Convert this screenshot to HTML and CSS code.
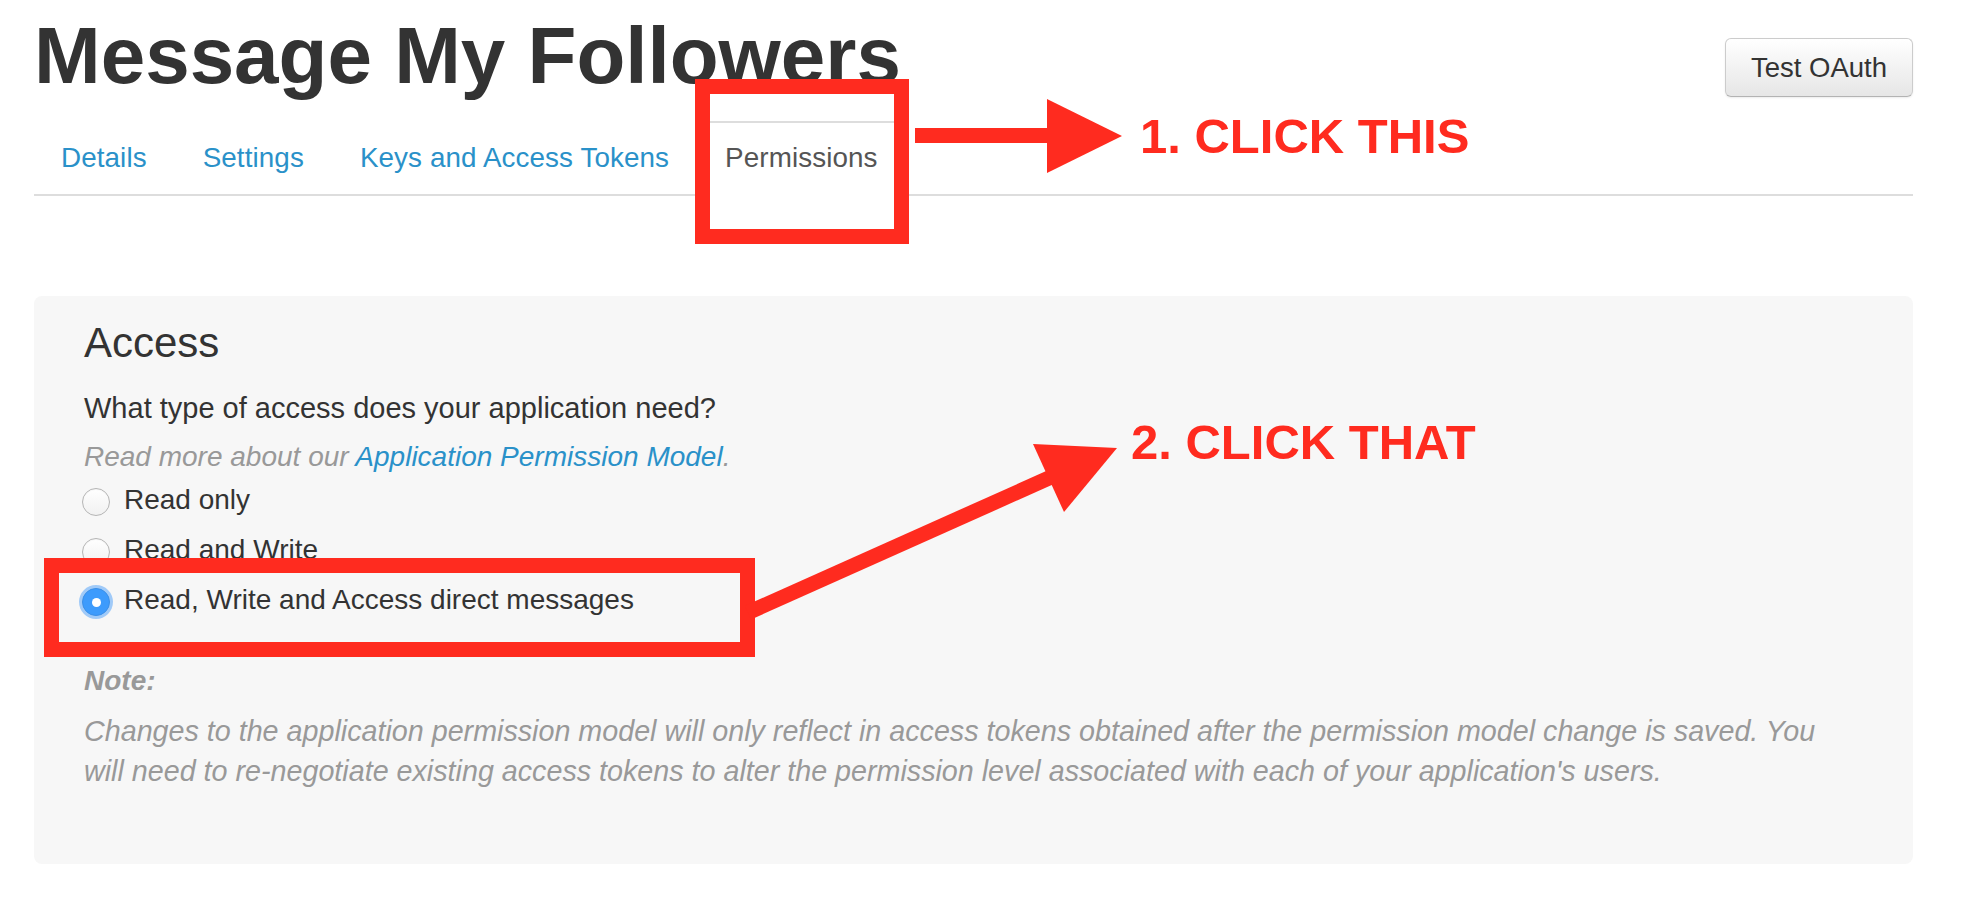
FILE: index.html
```html
<!DOCTYPE html>
<html lang="en">
<head>
<meta charset="utf-8">
<title>Message My Followers - Permissions</title>
<link rel="stylesheet" href="styles.css">
</head>
<body>
<div class="page">
  <header class="app-header">
    <h1 class="app-title">Message My Followers</h1>
    <button class="btn" type="button">Test OAuth</button>
  </header>
  <nav class="tabs">
    <a class="tab" href="#">Details</a>
    <a class="tab" href="#">Settings</a>
    <a class="tab" href="#">Keys and Access Tokens</a>
    <a class="tab active" href="#">Permissions</a>
  </nav>
  <section class="card">
    <h2 class="card-title">Access</h2>
    <p class="question">What type of access does your application need?</p>
    <p class="hint">Read more about our <a href="#">Application Permission Model</a>.</p>
    <label class="option option-first"><input class="radio" type="radio" name="access"><span>Read only</span></label>
    <label class="option"><input class="radio" type="radio" name="access"><span>Read and Write</span></label>
    <label class="option"><input class="radio" type="radio" name="access" checked><span>Read, Write and Access direct messages</span></label>
    <p class="note-title">Note:</p>
    <p class="note">Changes to the application permission model will only reflect in access tokens obtained after the permission model change is saved. You will need to re-negotiate existing access tokens to alter the permission level associated with each of your application's users.</p>
  </section>
</div>

<svg class="annotations" width="1962" height="898" viewBox="0 0 1962 898" xmlns="http://www.w3.org/2000/svg">
  <rect x="702.5" y="86.5" width="199" height="150" fill="none" stroke="#ff2b1f" stroke-width="15"/>
  <rect x="915" y="128" width="134" height="15" fill="#ff2b1f"/>
  <polygon points="1047,99 1122,136 1047,173" fill="#ff2b1f"/>
  <rect x="51.5" y="565.5" width="696" height="84" fill="none" stroke="#ff2b1f" stroke-width="15"/>
  <line x1="748" y1="612.6" x2="1052" y2="476.7" stroke="#ff2b1f" stroke-width="15"/>
  <polygon points="1033,444 1117,448 1064,512" fill="#ff2b1f"/>
</svg>
<div class="callout callout-one">1. CLICK THIS</div>
<div class="callout callout-two">2. CLICK THAT</div>
</body>
</html>
```

FILE: styles.css
```css
* { box-sizing: border-box; }

html, body {
  margin: 0;
  padding: 0;
  background: #ffffff;
}

body {
  font-family: "Liberation Sans", Arial, Helvetica, sans-serif;
  color: #333333;
  width: 1962px;
  height: 898px;
  overflow: hidden;
}

.page {
  padding: 0 49px 0 34px;
}

/* Header */
.app-header {
  display: flex;
  justify-content: space-between;
  align-items: flex-start;
}

.app-title {
  margin: 16px 0 0 0;
  font-size: 80px;
  line-height: 80px;
  font-weight: 700;
  color: #333333;
}

.btn {
  margin-top: 38px;
  height: 59px;
  padding: 0 25px;
  font-family: "Liberation Sans", Arial, Helvetica, sans-serif;
  font-size: 27.5px;
  color: #333333;
  background: linear-gradient(#ffffff, #e6e6e6);
  border: 1px solid #cccccc;
  border-bottom-color: #b3b3b3;
  border-radius: 6px;
  box-shadow: inset 0 1px 0 rgba(255,255,255,0.3), 0 1px 2px rgba(0,0,0,0.08);
}

/* Tabs */
.tabs {
  display: flex;
  gap: 2px;
  margin-top: 24px;
  border-bottom: 2px solid #dddddd;
}

.tab {
  display: block;
  margin-bottom: -2px;
  padding: 20px 25px 21px;
  border: 2px solid transparent;
  font-size: 27.8px;
  line-height: 30px;
  letter-spacing: 0.1px;
  color: #2a91c9;
  text-decoration: none;
}

.tab.active {
  color: #555555;
  background: #ffffff;
  border-color: #dddddd;
  border-bottom-color: #ffffff;
}

/* Card */
.card {
  margin-top: 100px;
  padding: 24px 50px 73px 50px;
  background: #f7f7f7;
  border-radius: 8px;
}

.card p { margin: 0; }

.card-title {
  margin: 0;
  font-size: 42px;
  line-height: 46px;
  font-weight: 400;
  color: #333333;
}

.question,
.hint,
.option,
.note-title,
.note {
  font-size: 28px;
  line-height: 40px;
}

.card .question {
  margin-top: 22px;
  font-size: 29px;
  color: #333333;
}

.card .hint {
  margin-top: 9px;
  font-style: italic;
  color: #999999;
}

.hint a {
  color: #2a91c9;
  text-decoration: none;
}

.option {
  display: flex;
  align-items: center;
  height: 40px;
  margin-top: 10px;
  color: #333333;
}

.option-first { margin-top: 3px; }

.radio {
  appearance: none;
  -webkit-appearance: none;
  position: relative;
  width: 28px;
  height: 28px;
  margin: 4px 14px 0 -2px;
  border-radius: 50%;
  border: 1px solid #b5b5b5;
  background: linear-gradient(#ffffff, #f1f1f1);
  box-shadow: inset 0 1px 1px rgba(0,0,0,0.04);
  flex: none;
}

.radio:checked {
  background: #3d9bfc;
  border-color: #3a8fe8;
  box-shadow: 0 0 0 3px rgba(90, 165, 250, 0.55);
}

.radio:checked::after {
  content: "";
  position: absolute;
  left: 50%;
  top: 50%;
  width: 9px;
  height: 9px;
  margin: -4.5px 0 0 -4.5px;
  border-radius: 50%;
  background: #ffffff;
}

.card .note-title {
  margin-top: 41px;
  font-weight: 700;
  font-style: italic;
  color: #999999;
}

.card .note {
  margin-top: 10px;
  max-width: 1765px;
  font-size: 28.7px;
  font-style: italic;
  color: #999999;
}

/* Annotation overlay */
.annotations {
  position: absolute;
  left: 0;
  top: 0;
  pointer-events: none;
}

.callout {
  position: absolute;
  font-family: "Liberation Sans", Arial, Helvetica, sans-serif;
  font-weight: 700;
  font-size: 49px;
  line-height: 48px;
  color: #ff2b1f;
  white-space: nowrap;
}

.callout-one { left: 1140px; top: 112px; }
.callout-two { left: 1131px; top: 418px; }
```
